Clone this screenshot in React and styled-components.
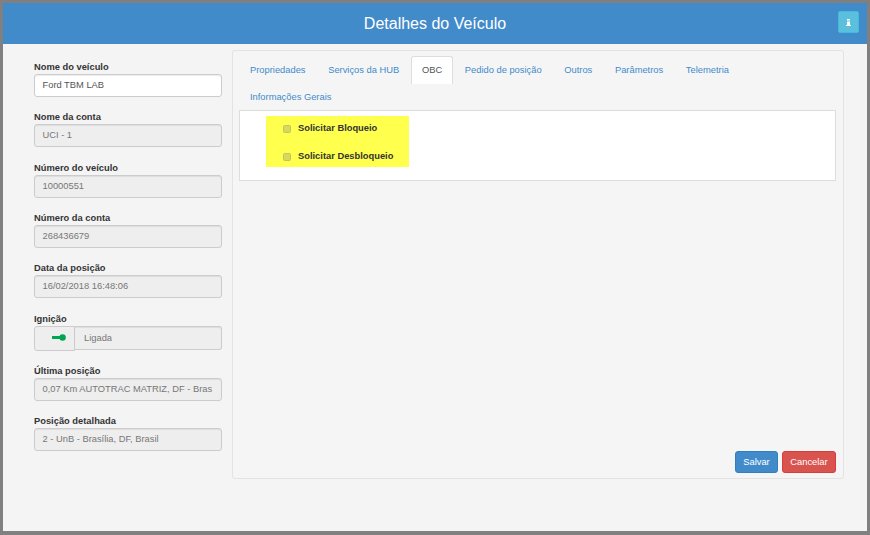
import styled, { createGlobalStyle } from "styled-components";

const Global = createGlobalStyle`
html, body {
  margin: 0;
  height: 100%;
  background: #808080;
  font-family: "Liberation Sans", Arial, sans-serif;
}
* { box-sizing: border-box; }
`;

const Modal = styled.div`
margin: 3px 3px 0 3px;
width: 864px;
height: 528px;
background: #f4f4f4;
display: flex;
flex-direction: column;
`;

const Header = styled.div`
height: 41px;
flex: none;
background: #428bca;
display: grid;
grid-template-columns: 1fr auto 1fr;
align-items: center;
padding: 0 8px;
`;

const Title = styled.h1`
grid-column: 2;
margin: 0;
color: #fff;
font-size: 16px;
font-weight: normal;
`;

const InfoButton = styled.button`
grid-column: 3;
justify-self: end;
width: 21px;
height: 22px;
margin-top: -3px;
padding: 0;
background: #5bc0de;
border: 1px solid #46b8da;
border-radius: 2px;
color: #fff;
display: flex;
align-items: center;
justify-content: center;
`;

const Body = styled.div`
flex: 1;
display: flex;
align-items: flex-start;
padding: 6px 23px 0 31px;
`;

const Side = styled.div`
width: 188px;
flex: none;
margin-right: 10px;
padding-top: 11px;
`;

const Field = styled.div`
height: ${({ $tall }) => ($tall ? "52.2px" : "50.35px")};
`;

const Label = styled.div`
font-size: 9.33px;
font-weight: bold;
line-height: 12px;
height: 12px;
margin-bottom: 1px;
color: #333;
`;

const Input = styled.div`
height: 23px;
border: 1px solid #ccc;
border-radius: 3px;
background: ${({ $disabled }) => ($disabled ? "#eee" : "#fff")};
color: ${({ $disabled }) => ($disabled ? "#777" : "#555")};
box-shadow: inset 0 1px 1px rgba(0, 0, 0, 0.075);
font-size: 9.33px;
line-height: 21px;
padding: 0 7.5px;
white-space: nowrap;
overflow: hidden;
`;

const Group = styled.div`
display: flex;
height: 25px;
`;

const Addon = styled.div`
width: 41px;
flex: none;
height: 25px;
background: #eee;
border: 1px solid #ccc;
border-radius: 3px 0 0 3px;
display: flex;
align-items: flex-start;
justify-content: center;
padding: 7px 0 0 9px;
`;

const GroupInput = styled(Input)`
flex: 1;
height: 24px;
line-height: 22px;
border-left: 0;
padding-left: 9px;
border-radius: 0 3px 3px 0;
`;

const Panel = styled.div`
flex: 1;
height: 429px;
border: 1px solid #e3e3e3;
border-radius: 3px;
background: #f5f5f5;
padding: 5px 7px 5px 6px;
display: flex;
flex-direction: column;
`;

const Tabs = styled.div`
display: flex;
flex-wrap: wrap;
`;

const Tab = styled.div`
height: ${({ $active }) => ($active ? "28px" : "26px")};
margin-right: 0.7px;
padding: ${({ $wrapped }) => ($wrapped ? "6px" : "7px")} 10px 0 10px;
font-size: 9.33px;
line-height: 12px;
color: ${({ $active }) => ($active ? "#555" : "#428bca")};
background: ${({ $active }) => ($active ? "#fff" : "transparent")};
border: 1px solid ${({ $active }) => ($active ? "#ddd" : "transparent")};
border-bottom: 0;
border-radius: 3px 3px 0 0;
`;

const TabContent = styled.div`
height: 71px;
background: #fff;
border: 1px solid #ddd;
padding: 5px 0 0 26px;
flex: none;
`;

const Highlight = styled.div`
width: 143px;
height: 51px;
background: #ffff4d;
padding: 6px 0 0 17px;
display: flex;
flex-direction: column;
gap: 16px;
`;

const Option = styled.label`
display: flex;
align-items: center;
height: 12px;
font-size: 9.33px;
font-weight: bold;
color: #333;
`;

const Box = styled.span`
width: 8px;
height: 8px;
margin: 1px 7px 0 0;
background: #d8d85c;
border: 1px solid #c2c25e;
border-radius: 1.5px;
flex: none;
`;

const Actions = styled.div`
margin-top: auto;
display: flex;
justify-content: flex-end;
gap: 4px;
`;

const Button = styled.button`
height: 22px;
padding: 0;
width: ${({ $w }) => $w}px;
font-family: inherit;
font-size: 9.33px;
color: #fff;
border-radius: 3px;
border: 1px solid ${({ $danger }) => ($danger ? "#d43f3a" : "#357ebd")};
background: ${({ $danger }) => ($danger ? "#d9534f" : "#428bca")};
`;

const KeyIcon = () => (
  <svg width="14" height="7" viewBox="0 0 14 7">
    <rect x="0" y="2" width="9" height="3" fill="#00a651" />
    <circle cx="10.6" cy="3.5" r="3.2" fill="#00a651" />
  </svg>
);

const InfoIcon = () => (
  <svg width="5" height="7" viewBox="0 0 5 7">
    <rect x="1" y="0" width="3" height="1.5" fill="#fff" />
    <rect x="1" y="2.5" width="3" height="3.5" fill="#fff" />
    <rect x="0" y="6" width="5" height="1" fill="#fff" />
  </svg>
);

const fields = [
  { label: "Nome do veículo", value: "Ford TBM LAB" },
  { label: "Nome da conta", value: "UCI - 1", disabled: true },
  { label: "Número do veículo", value: "10000551", disabled: true },
  { label: "Número da conta", value: "268436679", disabled: true },
  { label: "Data da posição", value: "16/02/2018 16:48:06", disabled: true },
  { label: "Ignição", value: "Ligada", key: true },
  { label: "Última posição", value: "0,07 Km AUTOTRAC MATRIZ, DF - Bras", disabled: true },
  { label: "Posição detalhada", value: "2 - UnB - Brasília, DF, Brasil", disabled: true },
];

const tabs = ["Propriedades", "Serviços da HUB", "OBC", "Pedido de posição", "Outros", "Parâmetros", "Telemetria", "Informações Gerais"];

const App = () => {
  return (
    <>
      <Global />
      <Modal>
        <Header>
          <Title>Detalhes do Veículo</Title>
          <InfoButton><InfoIcon /></InfoButton>
        </Header>
        <Body>
          <Side>
            {fields.map((f) => (
              <Field key={f.label} $tall={f.key}>
                <Label>{f.label}</Label>
                {f.key ? (
                  <Group>
                    <Addon><KeyIcon /></Addon>
                    <GroupInput $disabled>{f.value}</GroupInput>
                  </Group>
                ) : (
                  <Input $disabled={f.disabled}>{f.value}</Input>
                )}
              </Field>
            ))}
          </Side>
          <Panel>
            <Tabs>
              {tabs.map((t) => (
                <Tab key={t} $active={t === "OBC"} $wrapped={t === "Informações Gerais"}>{t}</Tab>
              ))}
            </Tabs>
            <TabContent>
              <Highlight>
                <Option><Box />Solicitar Bloqueio</Option>
                <Option><Box />Solicitar Desbloqueio</Option>
              </Highlight>
            </TabContent>
            <Actions>
              <Button $w={43}>Salvar</Button>
              <Button $w={54} $danger>Cancelar</Button>
            </Actions>
          </Panel>
        </Body>
      </Modal>
    </>
  );
};

export default App;
